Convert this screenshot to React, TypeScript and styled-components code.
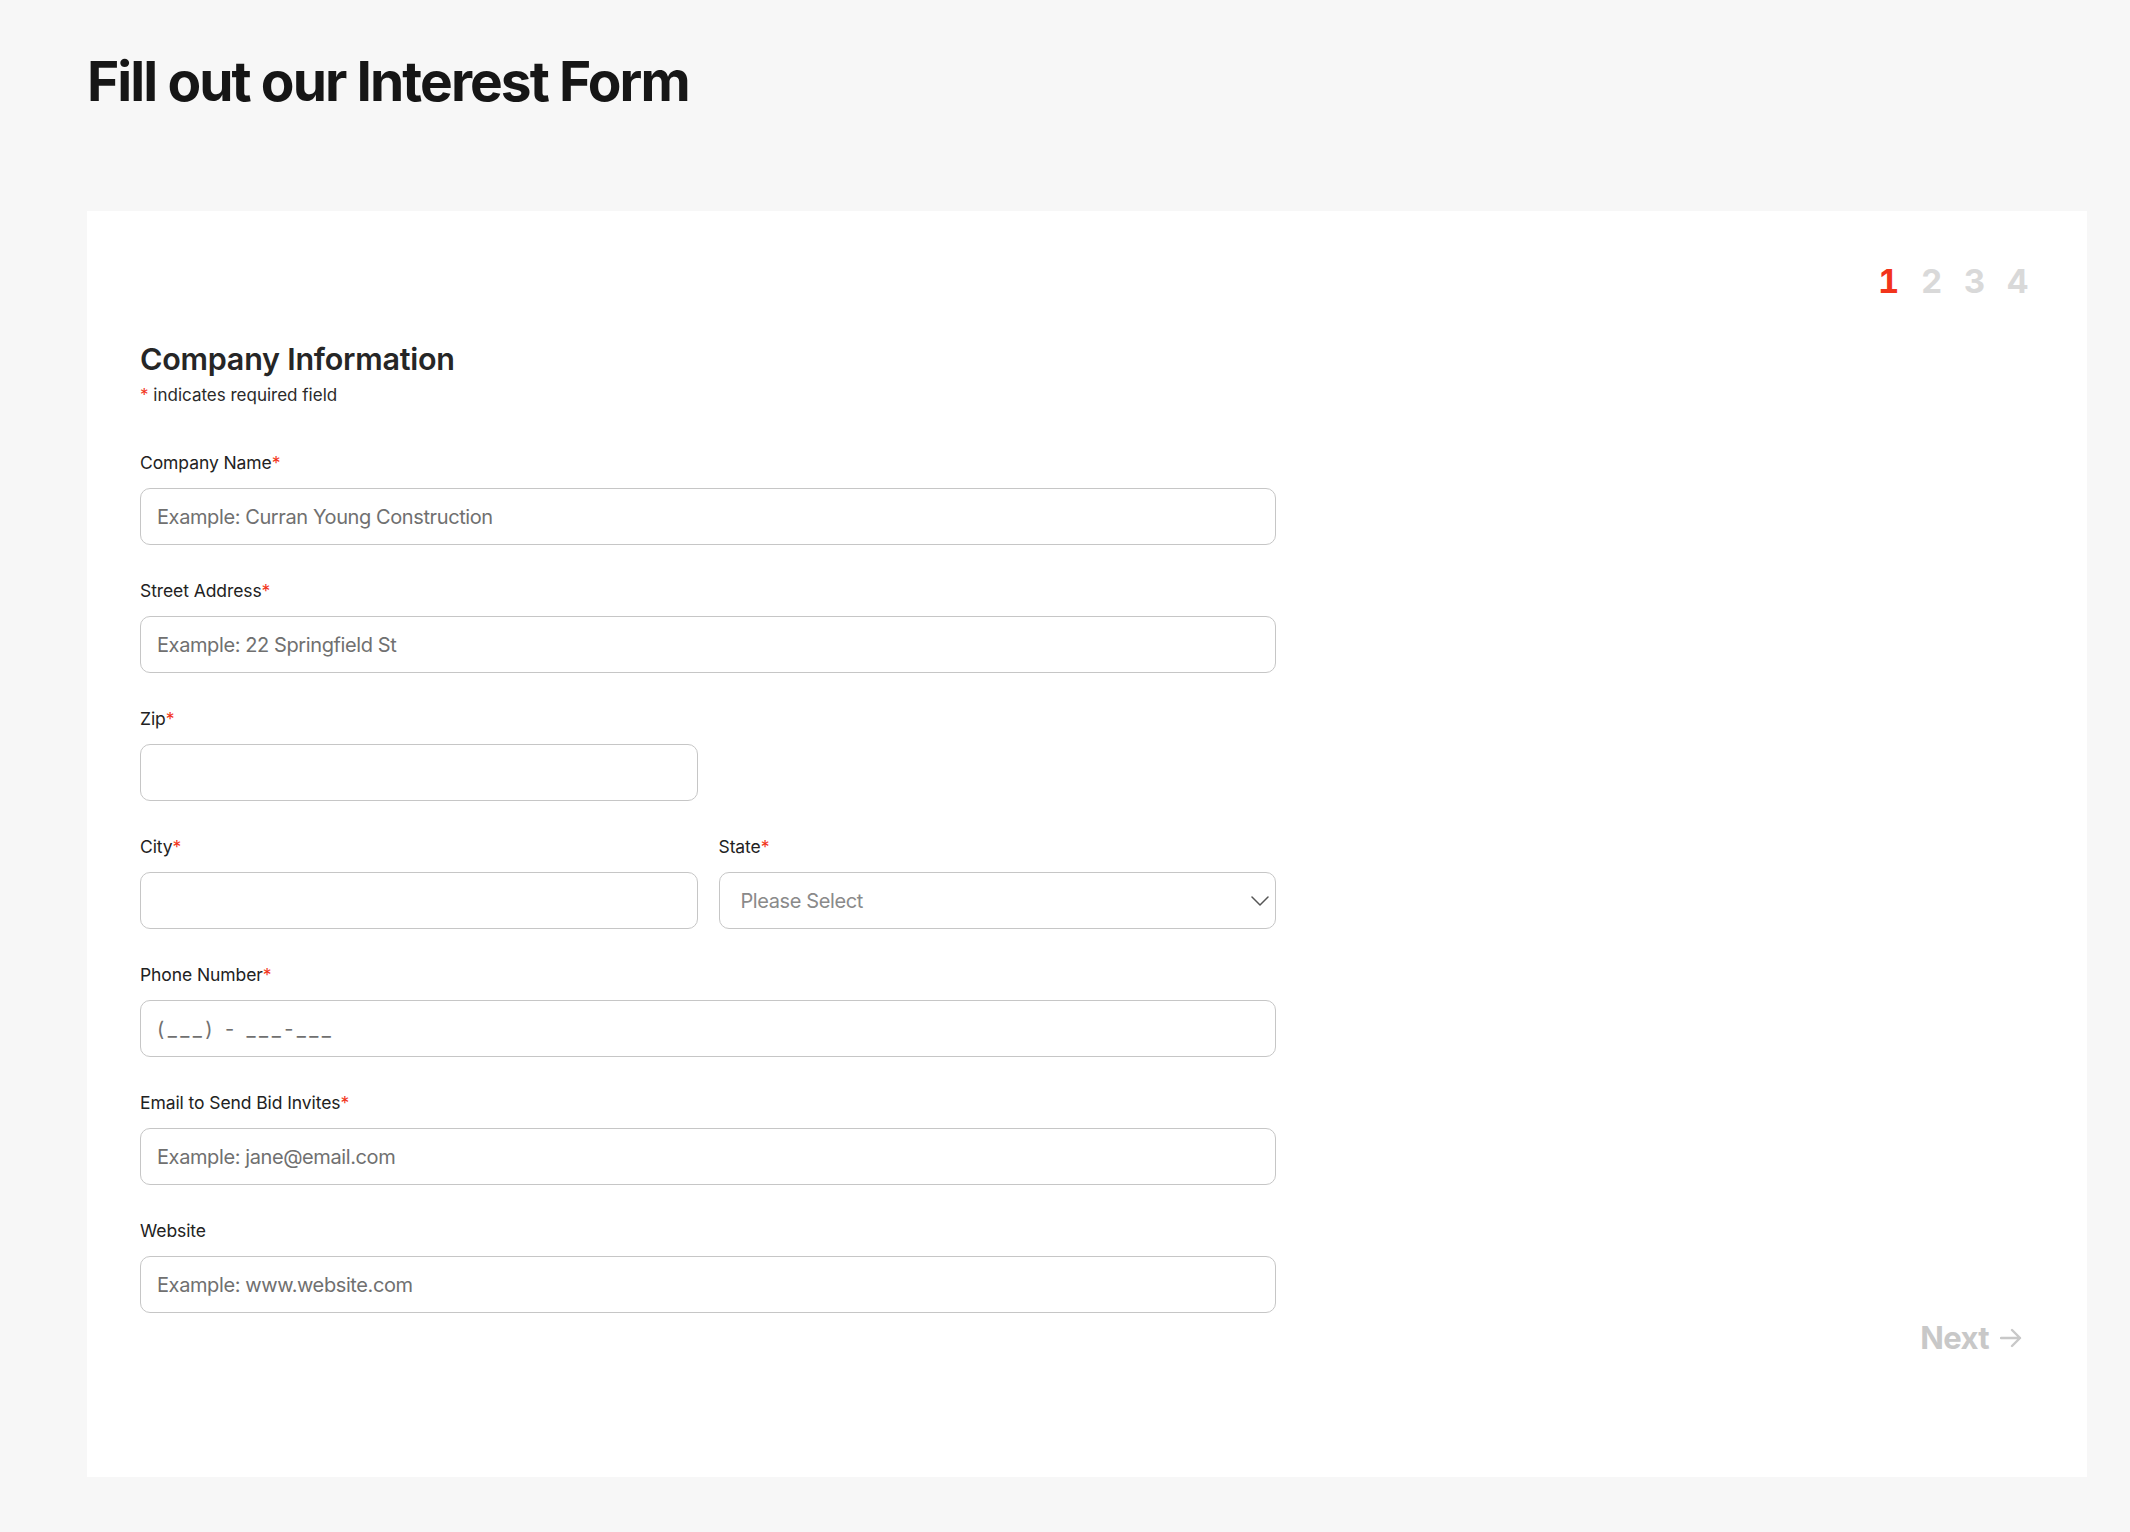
import React from "react";
import styled, { createGlobalStyle } from "styled-components";

const GlobalStyle = createGlobalStyle`
  * { box-sizing: border-box; }
  html, body { margin: 0; padding: 0; }
  body {
    background: #f7f7f7;
    font-family: Inter, "Noto Sans", "Liberation Sans", sans-serif;
    color: #1f1f1f;
  }
`;

const Page = styled.main`
  min-height: 100vh;
  padding: 48px 43px 56px 87px;
  display: flex;
  flex-direction: column;
`;

const Title = styled.h1`
  margin: 0;
  font-size: 55px;
  line-height: 66px;
  font-weight: 700;
  letter-spacing: -0.035em;
  color: #161616;
`;

const Card = styled.section`
  margin-top: 97px;
  width: 2000px;
  background: #ffffff;
  padding: 50px 60px 121px 53px;
  display: flex;
  flex-direction: column;
`;

const Steps = styled.div`
  display: flex;
  justify-content: flex-end;
  gap: 23px;
  height: 40px;
  align-items: center;
`;

const Step = styled.span<{ $active?: boolean }>`
  display: inline-block;
  width: 20px;
  text-align: center;
  font-size: 33px;
  line-height: 40px;
  font-weight: 700;
  font-variant-numeric: tabular-nums;
  color: ${(p) => (p.$active ? "#f2341b" : "#d9d9d9")};
`;

const Heading = styled.h2`
  margin: 38px 0 0;
  font-size: 30.5px;
  line-height: 40px;
  font-weight: 600;
  letter-spacing: -0.008em;
  color: #262626;
`;

const Note = styled.p`
  margin: 5px 0 0;
  font-size: 17px;
  line-height: 22px;
  color: #2a2a2a;
`;

const Star = styled.span`
  color: #f2341b;
`;

const Form = styled.form`
  margin-top: 46px;
  width: 1136px;
  display: flex;
  flex-direction: column;
  gap: 35px;
`;

const Row = styled.div`
  display: grid;
  grid-template-columns: 1fr 1fr;
  gap: 21px;
`;

const Field = styled.label<{ $half?: boolean }>`
  display: flex;
  flex-direction: column;
  gap: 14px;
  width: ${(p) => (p.$half ? "558px" : "100%")};
`;

const LabelText = styled.span`
  font-size: 17.5px;
  line-height: 22px;
  color: #222;
  letter-spacing: -0.005em;
`;

const Input = styled.input<{ $spaced?: boolean }>`
  width: 100%;
  height: 57px;
  border: 1px solid #c6c6c6;
  border-radius: 10px;
  background: #fff;
  padding: 0 16px;
  font-family: Inter, "Noto Sans", "Liberation Sans", sans-serif;
  font-size: 20px;
  color: #222;
  outline: none;
  letter-spacing: ${(p) => (p.$spaced ? "0.17em" : "-0.02em")};
  &::placeholder {
    color: #707070;
  }
`;

const SelectWrap = styled.div`
  position: relative;
  width: 100%;
`;

const Select = styled.select`
  appearance: none;
  -webkit-appearance: none;
  width: 100%;
  height: 57px;
  border: 1px solid #c6c6c6;
  border-radius: 10px;
  background: #fff;
  padding: 0 40px 0 21px;
  font-family: Inter, "Noto Sans", "Liberation Sans", sans-serif;
  font-size: 20px;
  letter-spacing: -0.02em;
  color: #8a8a8a;
  outline: none;
`;

const Chevron = styled.svg`
  position: absolute;
  right: 7px;
  top: 50%;
  transform: translateY(-50%);
  pointer-events: none;
`;

const Footer = styled.div`
  margin-top: 7px;
  display: flex;
  justify-content: flex-end;
`;

const NextButton = styled.button`
  border: none;
  background: none;
  padding: 0;
  display: flex;
  align-items: center;
  gap: 11px;
  font-family: Inter, "Noto Sans", "Liberation Sans", sans-serif;
  font-size: 31px;
  line-height: 36px;
  font-weight: 700;
  letter-spacing: -0.02em;
  color: #c8c8c8;
  cursor: default;
`;

const Arrow = styled.svg`
  margin-right: 5px;
`;

type FieldDef = { label: string; required?: boolean; placeholder?: string };

const Label: React.FC<{ text: string; required?: boolean }> = ({ text, required }) => (
  <LabelText>
    {text}
    {required && <Star>*</Star>}
  </LabelText>
);

const TextField: React.FC<FieldDef & { half?: boolean; spaced?: boolean }> = ({
  label,
  required,
  placeholder,
  half,
  spaced,
}) => (
  <Field $half={half}>
    <Label text={label} required={required} />
    <Input placeholder={placeholder} $spaced={spaced} />
  </Field>
);

export default function App() {
  return (
    <>
      <GlobalStyle />
      <Page>
        <Title>Fill out our Interest Form</Title>
        <Card>
          <Steps>
            <Step $active>1</Step>
            <Step>2</Step>
            <Step>3</Step>
            <Step>4</Step>
          </Steps>
          <Heading>Company Information</Heading>
          <Note>
            <Star>*</Star> indicates required field
          </Note>
          <Form onSubmit={(e) => e.preventDefault()}>
            <TextField label="Company Name" required placeholder="Example: Curran Young Construction" />
            <TextField label="Street Address" required placeholder="Example: 22 Springfield St" />
            <TextField label="Zip" required half />
            <Row>
              <TextField label="City" required />
              <Field>
                <Label text="State" required />
                <SelectWrap>
                  <Select defaultValue="">
                    <option value="" disabled>
                      Please Select
                    </option>
                  </Select>
                  <Chevron width="18" height="11" viewBox="0 0 18 11" fill="none">
                    <path d="M1 1.5 L9 9.5 L17 1.5" stroke="#555" strokeWidth="1.5" strokeLinecap="round" strokeLinejoin="round" />
                  </Chevron>
                </SelectWrap>
              </Field>
            </Row>
            <TextField label="Phone Number" required placeholder="(___) - ___-___" spaced />
            <TextField label="Email to Send Bid Invites" required placeholder="Example: jane@email.com" />
            <TextField label="Website" placeholder="Example: www.website.com" />
          </Form>
          <Footer>
            <NextButton type="button">
              Next
              <Arrow width="22" height="20" viewBox="0 0 22 20" fill="none">
                <path d="M1 10 H20 M12 2 L20 10 L12 18" stroke="#c8c8c8" strokeWidth="2.4" strokeLinecap="round" strokeLinejoin="round" />
              </Arrow>
            </NextButton>
          </Footer>
        </Card>
      </Page>
    </>
  );
}
